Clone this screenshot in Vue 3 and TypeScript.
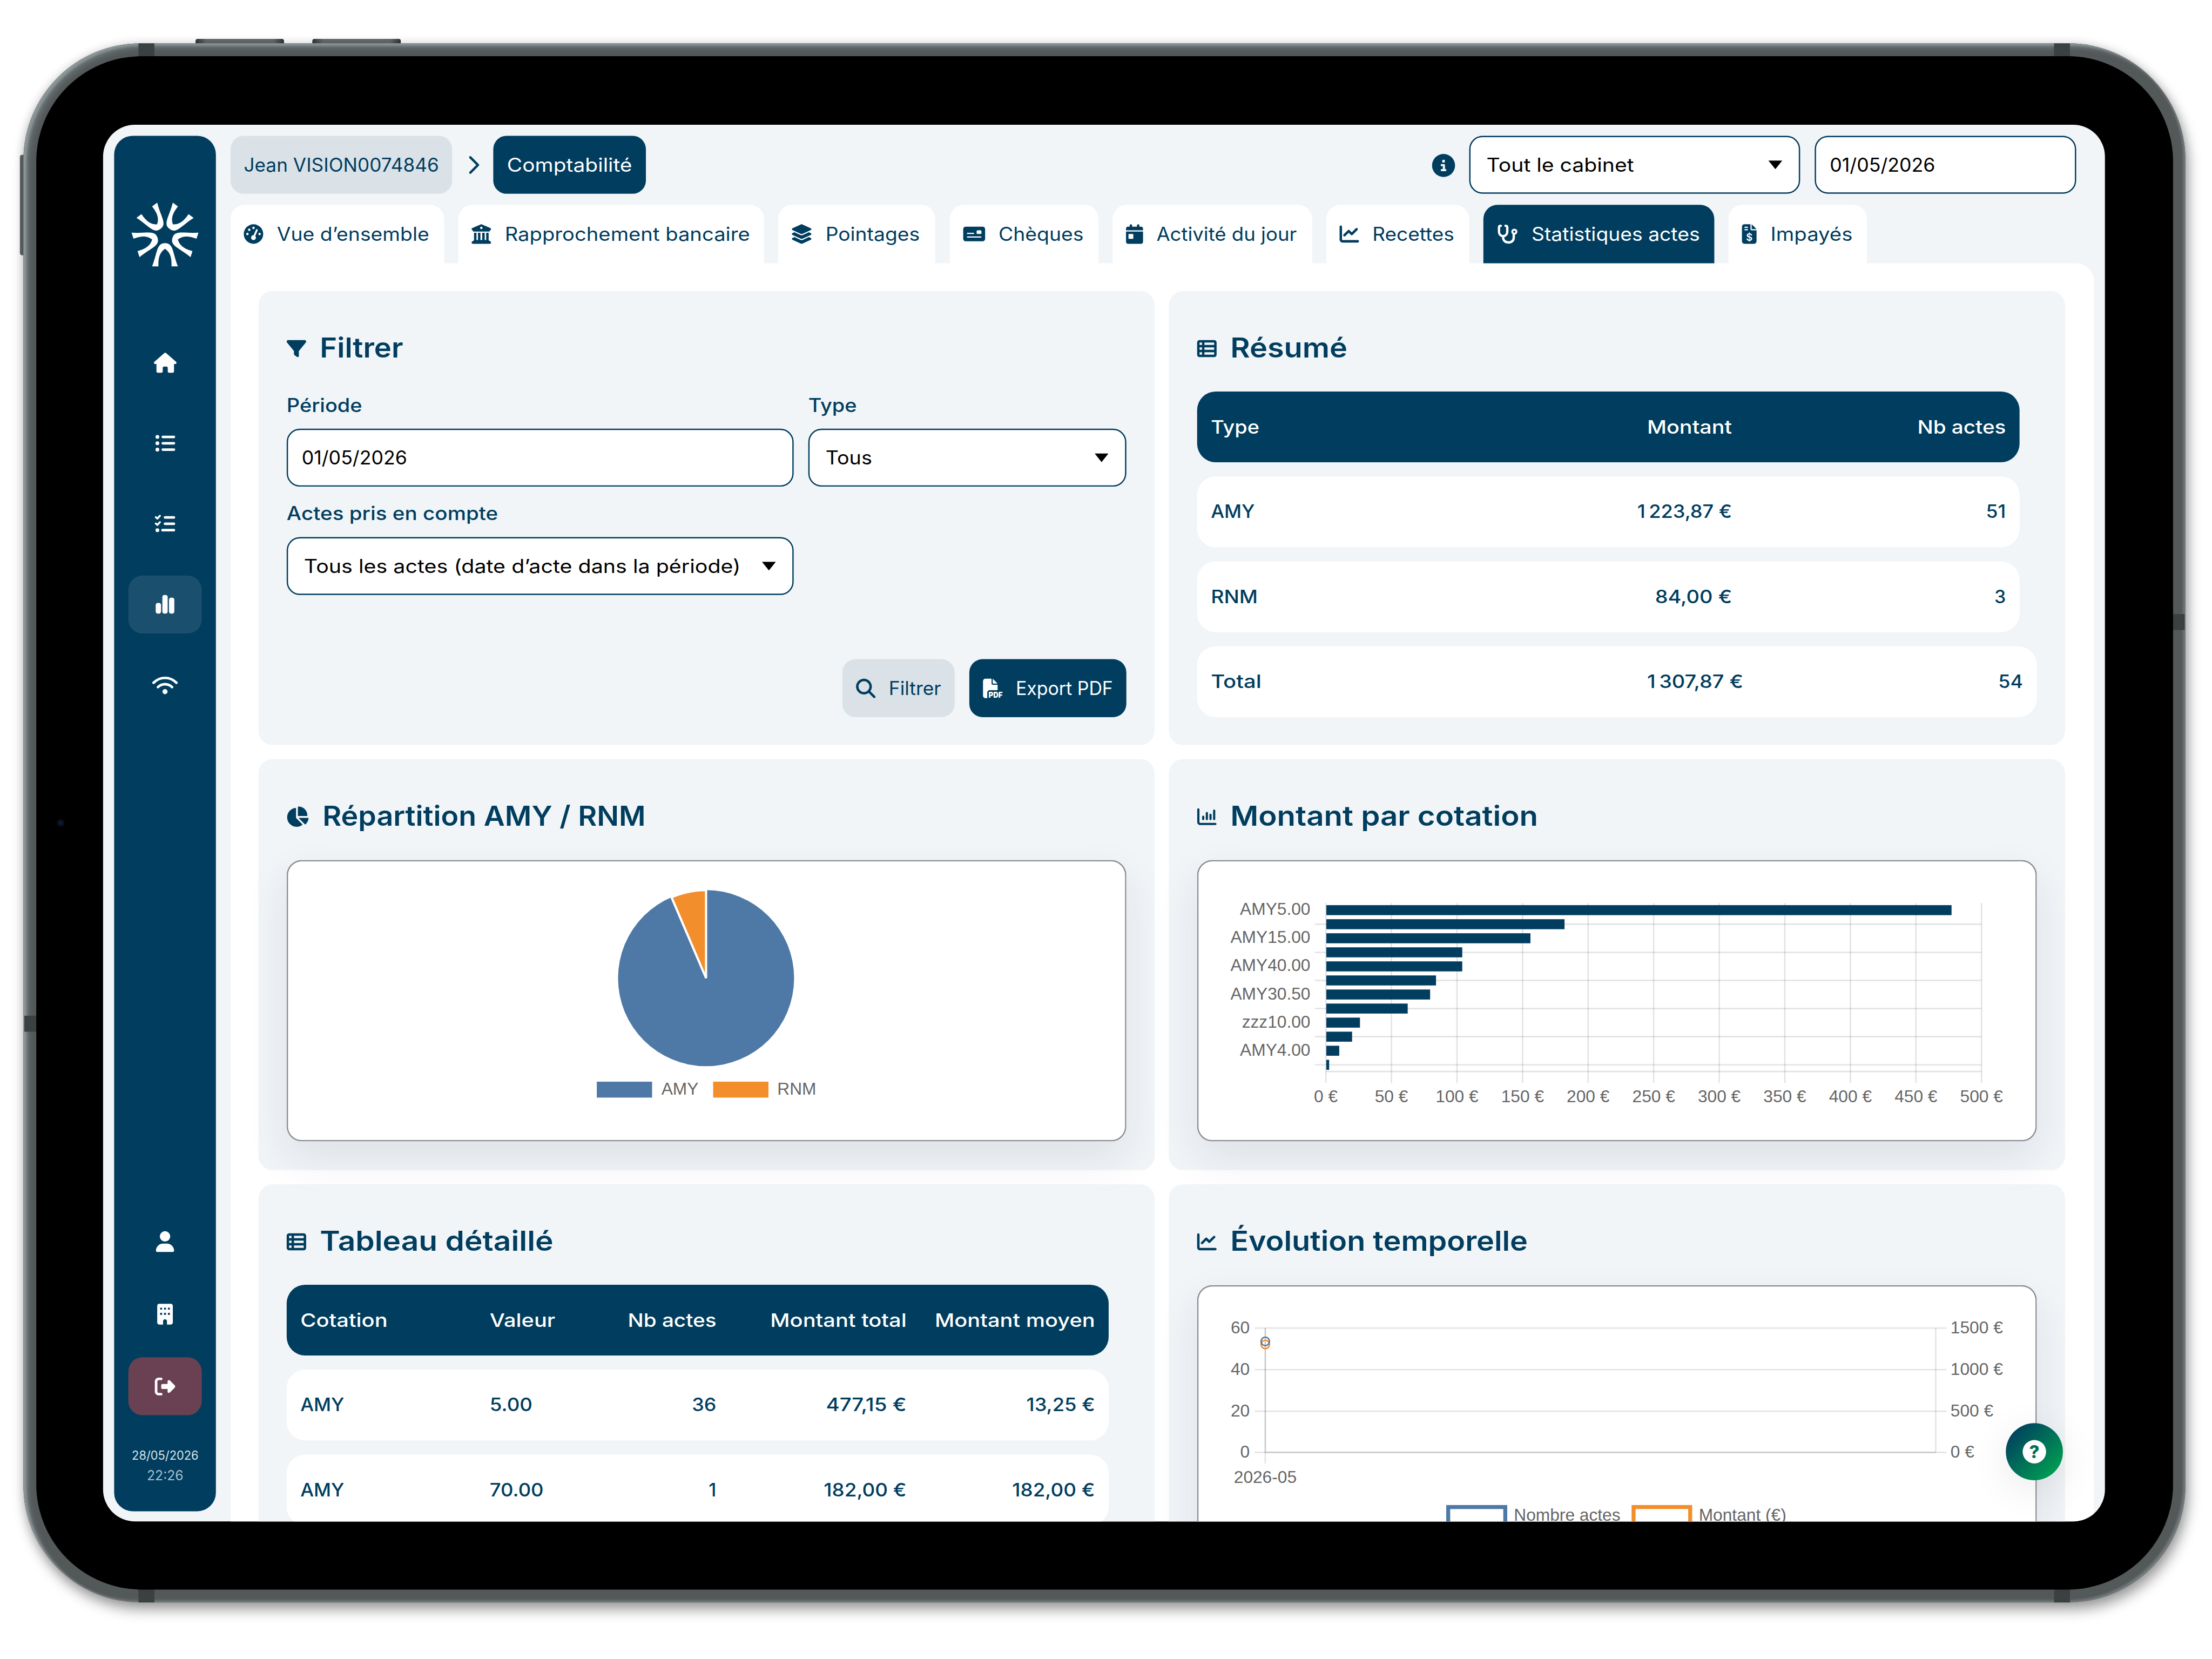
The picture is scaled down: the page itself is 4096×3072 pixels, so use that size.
<script setup lang="ts">
interface Icon { box: string; body: string }

const p = (d: string) => `<path fill="currentColor" fill-rule="evenodd" d="${d}"/>`
const s = (d: string, w: number) =>
  `<path fill="none" stroke="currentColor" stroke-width="${w}" stroke-linecap="round" stroke-linejoin="round" d="${d}"/>`

const icons: Record<string, Icon> = {
  home: { box: '0 0 576 512', body: p('M575.8 255.5c0 18-15 32.1-32 32.1h-32l.7 160.2c0 2.7-.2 5.4-.5 8.1V472c0 22.1-17.9 40-40 40H456H392c-22.1 0-40-17.9-40-40V384c0-17.7-14.3-32-32-32H256c-17.7 0-32 14.3-32 32v88c0 22.1-17.9 40-40 40H104c-22.1 0-40-17.9-40-40V287.6H32c-18 0-32-14-32-32.1c0-9 3-17 10-24L266.4 8c7-7 15-8 22-8s15 2 21 7L564.8 231.5c8 7 12 15 11 24z') },
  list: { box: '0 0 512 512', body: s('M200 96H480M200 256H480M200 416H480', 64) + '<g fill="currentColor"><circle cx="64" cy="96" r="48"/><circle cx="64" cy="256" r="48"/><circle cx="64" cy="416" r="48"/></g>' },
  check: { box: '0 0 512 512', body: s('M256 96H480M256 256H480M192 416H480', 64) + s('M24 88L64 124L128 54M24 248L64 284L128 214', 48) + '<circle cx="64" cy="416" r="48" fill="currentColor"/>' },
  bars: { box: '0 0 448 512', body: p('M160 80c0-26.5 21.5-48 48-48h32c26.5 0 48 21.5 48 48V432c0 26.5-21.5 48-48 48H208c-26.5 0-48-21.5-48-48V80zM0 272c0-26.5 21.5-48 48-48H80c26.5 0 48 21.5 48 48V432c0 26.5-21.5 48-48 48H48c-26.5 0-48-21.5-48-48V272zM368 96h32c26.5 0 48 21.5 48 48V432c0 26.5-21.5 48-48 48H368c-26.5 0-48-21.5-48-48V144c0-26.5 21.5-48 48-48z') },
  wifi: { box: '0 0 640 512', body: s('M32 192C195 29 445 29 608 192M142 302C245 202 395 202 498 302', 64) + '<circle cx="320" cy="416" r="64" fill="currentColor"/>' },
  user: { box: '0 0 448 512', body: p('M224 256A128 128 0 1 0 224 0a128 128 0 1 0 0 256zm-45.7 48C79.8 304 0 383.8 0 482.3C0 498.7 13.3 512 29.7 512H418.3c16.4 0 29.7-13.3 29.7-29.7C448 383.8 368.2 304 269.7 304H178.3z') },
  building: { box: '0 0 384 512', body: p('M48 0C21.500 0 0 21.500 0 48V464c0 26.500 21.500 48 48 48H144V432a48 48 0 0 1 96 0V512H336c26.500 0 48-21.500 48-48V48c0-26.500-21.500-48-48-48ZM72 96h48v48h-48ZM168 96h48v48h-48ZM264 96h48v48h-48ZM72 224h48v48h-48ZM168 224h48v48h-48ZM264 224h48v48h-48Z') },
  logout: { box: '0 0 512 512', body: p('M377.9 105.9L500.7 228.7c7.2 7.2 11.3 17.1 11.3 27.3s-4.1 20.1-11.3 27.3L377.9 406.1c-6.4 6.4-15 9.9-24 9.9c-18.700 0-33.900-15.200-33.900-33.900l0-62.100-128 0c-17.700 0-32-14.300-32-32l0-64c0-17.700 14.300-32 32-32l128 0 0-62.100c0-18.700 15.200-33.900 33.900-33.900c9 0 17.600 3.600 24 9.900zM160 96L96 96c-17.700 0-32 14.300-32 32l0 256c0 17.700 14.300 32 32 32l64 0c17.700 0 32 14.300 32 32s-14.300 32-32 32l-64 0c-53 0-96-43-96-96L0 128C0 75 43 32 96 32l64 0c17.700 0 32 14.300 32 32s-14.300 32-32 32z') },
  chevron: { box: '0 0 320 512', body: s('M50 64L242 256L50 448', 60) },
  info: { box: '0 0 512 512', body: p('M256 512A256 256 0 1 0 256 0a256 256 0 1 0 0 512zM216 336h24V272H216c-13.3 0-24-10.7-24-24s10.7-24 24-24h48c13.3 0 24 10.7 24 24v88h8c13.3 0 24 10.7 24 24s-10.7 24-24 24H216c-13.3 0-24-10.7-24-24s10.7-24 24-24zm40-208a32 32 0 1 1 0 64 32 32 0 1 1 0-64z') },
  gauge: { box: '0 0 512 512', body: p('M0 256a256 256 0 1 1 512 0A256 256 0 1 1 0 256zM288 96a32 32 0 1 0 -64 0 32 32 0 1 0 64 0zM256 416c35.300 0 64-28.700 64-64c0-17.400-6.900-33.100-18.100-44.600L366 161.700c5.300-12.100-.2-26.300-12.300-31.600s-26.300 .2-31.600 12.300L257.900 288c-.6 0-1.300 0-1.900 0c-35.300 0-64 28.700-64 64s28.700 64 64 64zM176 144a32 32 0 1 0 -64 0 32 32 0 1 0 64 0zM96 288a32 32 0 1 0 0-64 32 32 0 1 0 0 64zm352-32a32 32 0 1 0 -64 0 32 32 0 1 0 64 0z') },
  bank: { box: '0 0 512 512', body: p('M243.4 2.6l-224 96c-14 6-21.8 21-18.7 35.8S16.8 160 32 160v8c0 13.3 10.7 24 24 24H456c13.3 0 24-10.7 24-24v-8c15.2 0 28.3-10.7 31.3-25.6s-4.8-29.900-18.700-35.800l-224-96c-8-3.400-17.200-3.400-25.200 0zM128 224H64V420.3c-.6 .3-1.200 .7-1.800 1.100l-48 32c-11.700 7.800-17 22.400-12.900 35.900S17.900 512 32 512H480c14.100 0 26.500-9.200 30.600-22.700s-1.100-28.100-12.900-35.900l-48-32c-.6-.4-1.200-.7-1.800-1.100V224H384V416H344V224H280V416H232V224H168V416H128V224zM256 64a32 32 0 1 1 0 64 32 32 0 1 1 0-64z') },
  layers: { box: '32 0 512 512', body: p('M264.5 5.2c14.9-6.9 32.100-6.900 47 0l218.600 101c8.500 3.900 13.900 12.400 13.900 21.800s-5.400 17.900-13.900 21.800l-218.600 101c-14.900 6.900-32.100 6.900-47 0L45.900 149.800C37.400 145.800 32 137.300 32 128s5.400-17.900 13.900-21.800L264.500 5.200zM476.900 209.600l53.200 24.600c8.500 3.900 13.900 12.400 13.900 21.800s-5.400 17.900-13.900 21.800l-218.600 101c-14.900 6.900-32.100 6.900-47 0L45.900 277.800C37.400 273.800 32 265.300 32 256s5.400-17.900 13.900-21.800l53.200-24.600 152 70.200c23.400 10.800 50.400 10.800 73.800 0l152-70.200zm-152 198.200l152-70.200 53.200 24.600c8.500 3.900 13.900 12.400 13.900 21.800s-5.400 17.900-13.900 21.800l-218.600 101c-14.900 6.900-32.100 6.900-47 0L45.900 405.800C37.400 401.800 32 393.300 32 384s5.400-17.900 13.900-21.800l53.200-24.600 152 70.200c23.400 10.800 50.400 10.800 73.800 0z') },
  cheque: { box: '0 0 576 512', body: p('M64 64C28.700 64 0 92.700 0 128V384c0 35.300 28.700 64 64 64H512c35.300 0 64-28.700 64-64V128c0-35.300-28.700-64-64-64ZM112 224H272a16 16 0 0 1 0 32H112a16 16 0 0 1 0-32ZM112 320H464a16 16 0 0 1 0 32H112a16 16 0 0 1 0-32ZM376 160H456a24 24 0 0 1 24 24V232a24 24 0 0 1-24 24H376a24 24 0 0 1-24-24V184a24 24 0 0 1 24-24Z') },
  calendar: { box: '0 0 448 512', body: p('M128 0c17.7 0 32 14.3 32 32V64H288V32c0-17.7 14.3-32 32-32s32 14.3 32 32V64h48c26.5 0 48 21.5 48 48v48H0V112C0 85.5 21.5 64 48 64H96V32c0-17.7 14.3-32 32-32zM0 192H448V464c0 26.5-21.5 48-48 48H48c-26.5 0-48-21.5-48-48V192zm80 64c-8.8 0-16 7.2-16 16v96c0 8.8 7.2 16 16 16h96c8.8 0 16-7.2 16-16V272c0-8.8-7.2-16-16-16H80z') },
  line: { box: '0 0 512 512', body: p('M64 64c0-17.7-14.3-32-32-32S0 46.3 0 64V400c0 44.2 35.8 80 80 80H480c17.7 0 32-14.3 32-32s-14.3-32-32-32H80c-8.8 0-16-7.2-16-16V64zm406.6 86.600c12.500-12.500 12.500-32.800 0-45.300s-32.800-12.500-45.300 0L320 210.700l-57.400-57.400c-12.500-12.500-32.800-12.500-45.300 0l-112 112c-12.500 12.500-12.500 32.800 0 45.300s32.800 12.500 45.300 0L240 221.300l57.400 57.400c12.500 12.500 32.800 12.500 45.300 0l128-128z') },
  steth: { box: '0 0 576 512', body: s('M112 32C72 32 64 44 64 70V200a112 112 0 0 0 224 0V70C288 44 280 32 240 32M176 312V352a128 128 0 0 0 128 128a128 128 0 0 0 160-128V250', 64) + '<circle cx="480" cy="192" r="56" fill="none" stroke="currentColor" stroke-width="52"/>' },
  invoice: { box: '0 0 384 512', body: p('M64 0C28.700 0 0 28.700 0 64V448c0 35.300 28.700 64 64 64H320c35.300 0 64-28.700 64-64V160H256c-17.700 0-32-14.300-32-32V0ZM256 0V128H384ZM64 80a16 16 0 0 1 16-16H144a16 16 0 0 1 0 32H80A16 16 0 0 1 64 80ZM64 144a16 16 0 0 1 16-16H144a16 16 0 0 1 0 32H80a16 16 0 0 1-16-16Z') + '<text x="192" y="434" text-anchor="middle" font-family="Inter, sans-serif" font-size="260" font-weight="600" fill="#fff">$</text>' },
  filter: { box: '0 0 512 512', body: p('M3.9 54.9C10.5 40.9 24.5 32 40 32H472c15.5 0 29.5 8.9 36.1 22.900s4.600 30.500-5.200 42.500L320 320.900V448c0 12.100-6.800 23.200-17.700 28.600s-23.800 4.300-33.500-3l-64-48c-8.100-6-12.800-15.500-12.800-25.600V320.900L9 97.300C-.7 85.400-2.800 68.800 3.900 54.900z') },
  table: { box: '0 0 512 512', body: p('M0 96C0 60.7 28.7 32 64 32H448c35.3 0 64 28.7 64 64V416c0 35.3-28.7 64-64 64H64c-35.3 0-64-28.7-64-64V96zm64 0v64h64V96H64zm384 0H192v64H448V96zM64 224v64h64V224H64zm384 0H192v64H448V224zM64 352v64h64V352H64zm384 0H192v64H448V352z') },
  pie: { box: '20 0 560 512', body: p('M304 240V16.6c0-9 7-16.6 16-16.6C443.7 0 544 100.3 544 224c0 9-7.6 16-16.6 16H304zM32 272C32 150.7 122.1 50.3 239 34.3c9.2-1.3 17 6.1 17 15.4V288L412.5 444.5c6.7 6.7 6.2 17.7-1.5 23.1C371.8 495.6 323.8 512 272 512C139.5 512 32 404.6 32 272zm526.4 16c9.3 0 16.6 7.8 15.4 17c-7.7 55.9-34.6 105.600-73.900 142.300c-6 5.600-15.400 5.200-21.200-.7L320 288H558.400z') },
  column: { box: '0 0 512 512', body: s('M32 64V400a48 48 0 0 0 48 48H480M160 256V320M256 160V320M352 208V320M448 96V320', 58) },
  search: { box: '0 0 512 512', body: p('M416 208c0 45.9-14.9 88.3-40 122.7L502.6 457.400c12.500 12.500 12.500 32.800 0 45.300s-32.800 12.500-45.300 0L330.700 376c-34.400 25.200-76.800 40-122.700 40C93.100 416 0 322.900 0 208S93.100 0 208 0S416 93.100 416 208zM208 352a144 144 0 1 0 0-288 144 144 0 1 0 0 288z') },
  pdf: { box: '0 0 512 512', body: p('M0 64C0 28.700 28.700 0 64 0H224V128c0 17.700 14.300 32 32 32H384V304H176c-35.300 0-64 28.700-64 64V512H64c-35.300 0-64-28.700-64-64ZM384 128H256V0Z') + '<text x="146" y="506" textLength="366" lengthAdjust="spacingAndGlyphs" font-family="Inter, sans-serif" font-size="210" font-weight="900" fill="currentColor">PDF</text>' },
}

// Widens or narrows a label so that it takes exactly the given width.
const vFit = {
  mounted(el: HTMLElement, binding: { value: number }) {
    if (!binding.value) return
    const natural = el.offsetWidth
    el.style.width = `${binding.value}px`
    el.style.transformOrigin = '0 50%'
    el.style.transform = `scaleX(${binding.value / natural})`
  },
}

const menu = [
  { icon: 'home', w: 51, h: 46 },
  { icon: 'list', w: 46, h: 46 },
  { icon: 'check', w: 46, h: 46 },
  { icon: 'bars', w: 42, h: 48, active: true },
  { icon: 'wifi', w: 58, h: 46 },
]
const footer = [
  { icon: 'user', w: 42, h: 47 },
  { icon: 'building', w: 36, h: 47 },
  { icon: 'logout', w: 46, h: 46, danger: true },
]
const tabs = [
  { icon: 'gauge', label: 'Vue d’ensemble', box: 483, w: 344, iw: 44 },
  { icon: 'bank', label: 'Rapprochement bancaire', box: 691, w: 554, iw: 44 },
  { icon: 'layers', label: 'Pointages', box: 355, w: 213, iw: 46 },
  { icon: 'cheque', label: 'Chèques', box: 336, w: 192, iw: 50 },
  { icon: 'calendar', label: 'Activité du jour', box: 451, w: 317, iw: 39 },
  { icon: 'line', label: 'Recettes', box: 323, w: 185, iw: 44 },
  { icon: 'steth', label: 'Statistiques actes', box: 522, w: 380, iw: 48, active: true },
  { icon: 'invoice', label: 'Impayés', box: 313, w: 186, iw: 34 },
]

type Cell = [string, number]
const summaryHead: Cell[] = [['Type', 110], ['Montant', 192], ['Nb actes', 200]]
const summary: Cell[][] = [
  [['AMY', 99], ['1\u202f223,87 €', 214], ['51', 45]],
  [['RNM', 106], ['84,00 €', 174], ['3', 0]],
  [['Total', 114], ['1\u202f307,87 €', 217], ['54', 56]],
]
const detailHead: Cell[] = [['Cotation', 197], ['Valeur', 148], ['Nb actes', 200], ['Montant total', 308], ['Montant moyen', 362]]
const details: Cell[][] = [
  [['AMY', 99], ['5.00', 97], ['36', 55], ['477,15 €', 182], ['13,25 €', 155]],
  [['AMY', 99], ['70.00', 122], ['1', 0], ['182,00 €', 187], ['182,00 €', 187]],
]

const amounts = [477.15, 182, 156, 104, 104, 84, 79.5, 62.4, 26, 20, 10.2, 2.5]
const barLabels = ['AMY5.00', 'AMY15.00', 'AMY40.00', 'AMY30.50', 'zzz10.00', 'AMY4.00']
const barX = (v: number) => 291 + (v / 500) * 1482
const barY = (i: number) => 113.3 + i * 31.78
const ticks = Array.from({ length: 11 }, (_, i) => i * 50)
const share = (84 / 1307.87) * Math.PI * 2
const pieX = 948 - 199 * Math.sin(share)
const pieY = 267 - 199 * Math.cos(share)
const levels = [
  { y: 97, left: '60', right: '1500 €' },
  { y: 191, left: '40', right: '1000 €' },
  { y: 285, left: '20', right: '500 €' },
  { y: 378, left: '0', right: '0 €' },
]
</script>

<template>
  <div class="viewport">
    <div class="stage">
      <i class="key k1"></i><i class="key k2"></i><i class="key k3"></i>
      <div class="tablet">
        <i class="band b1"></i><i class="band b2"></i><i class="band b3"></i>
        <i class="band b4"></i><i class="band b5"></i><i class="band b6"></i>
        <div class="bezel">
          <i class="camera"></i>
          <div class="screen">
            <aside class="sidebar">
              <svg class="logo" viewBox="-75 -75 150 150">
                <path
                  v-for="n in 5" :key="n" :transform="`rotate(${n * 72})`" fill="#fff"
                  d="M-29.500 71C-17 40-20 18 0 18C20 18 17 40 29.500 71H15C16 48 10 38 0 31C-10 38-16 48-15 71Z"
                />
              </svg>
              <nav class="menu">
                <a v-for="m in menu" :key="m.icon" class="entry" :class="{ active: m.active }">
                  <svg :width="m.w" :height="m.h" :viewBox="icons[m.icon].box" v-html="icons[m.icon].body"></svg>
                </a>
              </nav>
              <nav class="foot">
                <a v-for="m in footer" :key="m.icon" class="entry" :class="{ danger: m.danger }">
                  <svg :width="m.w" :height="m.h" :viewBox="icons[m.icon].box" v-html="icons[m.icon].body"></svg>
                </a>
              </nav>
              <div class="date"><span v-fit="151">28/05/2026</span></div>
              <div class="time"><span v-fit="83">22:26</span></div>
            </aside>

            <main class="main">
              <header class="topbar">
                <div class="chip soft jean"><span v-fit="441">Jean VISION0074846</span></div>
                <svg class="chev" :viewBox="icons.chevron.box" v-html="icons.chevron.body"></svg>
                <div class="chip solid compta"><span v-fit="283">Comptabilité</span></div>
                <svg class="info" :viewBox="icons.info.box" v-html="icons.info.body"></svg>
                <div class="field select cabinet"><span v-fit="333">Tout le cabinet</span><i class="caret"></i></div>
                <div class="field day"><span v-fit="238">01/05/2026</span></div>
              </header>

              <nav class="tabs">
                <a v-for="t in tabs" :key="t.label" class="tab" :class="{ on: t.active }" :style="{ width: t.box + 'px' }">
                  <svg :width="t.iw" height="44" :viewBox="icons[t.icon].box" v-html="icons[t.icon].body"></svg>
                  <span v-fit="t.w">{{ t.label }}</span>
                </a>
              </nav>

              <div class="panel">
                <section class="card r1">
                  <h2><svg :viewBox="icons.filter.box" v-html="icons.filter.body"></svg><span v-fit="188">Filtrer</span></h2>
                  <div class="form">
                    <label class="wide"><span v-fit="171">Période</span><div class="field"><span v-fit="238">01/05/2026</span></div></label>
                    <label class="slim"><span v-fit="110">Type</span><div class="field select"><span v-fit="105">Tous</span><i class="caret"></i></div></label>
                    <label class="wide"><span v-fit="478">Actes pris en compte</span><div class="field select"><span v-fit="987">Tous les actes (date d’acte dans la période)</span><i class="caret"></i></div></label>
                  </div>
                  <div class="actions">
                    <div class="chip soft find"><svg width="44" height="44" :viewBox="icons.search.box" v-html="icons.search.body"></svg><span v-fit="118">Filtrer</span></div>
                    <div class="chip solid export"><svg width="44" height="44" :viewBox="icons.pdf.box" v-html="icons.pdf.body"></svg><span v-fit="220">Export PDF</span></div>
                  </div>
                </section>

                <section class="card r1">
                  <h2><svg :viewBox="icons.table.box" v-html="icons.table.body"></svg><span v-fit="265">Résumé</span></h2>
                  <div class="rows summary">
                    <div class="row head"><div v-for="c in summaryHead" :key="c[0]" class="cell"><span v-fit="c[1]">{{ c[0] }}</span></div></div>
                    <div v-for="(r, i) in summary" :key="i" class="row" :class="{ total: i === 2 }">
                      <div v-for="(c, j) in r" :key="j" class="cell"><span v-fit="c[1]">{{ c[0] }}</span></div>
                    </div>
                  </div>
                </section>

                <section class="card r2">
                  <h2><svg class="big" :viewBox="icons.pie.box" v-html="icons.pie.body"></svg><span v-fit="730">Répartition AMY / RNM</span></h2>
                  <div class="chart">
                    <svg width="1897" height="636" viewBox="0 0 1897 636">
                      <circle cx="948" cy="267" r="199" fill="#4e79a7" />
                      <path :d="`M948 267L${pieX} ${pieY}A199 199 0 0 1 948 68Z`" fill="#f28e2b" stroke="#fff" stroke-width="5" stroke-linejoin="bevel" />
                      <rect x="701" y="501" width="125" height="36" fill="#4e79a7" />
                      <text x="847" y="530">AMY</text>
                      <rect x="964" y="501" width="125" height="36" fill="#f28e2b" />
                      <text x="1109" y="530">RNM</text>
                    </svg>
                  </div>
                </section>

                <section class="card r2">
                  <h2><svg :viewBox="icons.column.box" v-html="icons.column.body"></svg><span v-fit="696">Montant par cotation</span></h2>
                  <div class="chart">
                    <svg width="1897" height="636" viewBox="0 0 1897 636">
                      <g stroke="#000" stroke-opacity=".11" stroke-width="3.2">
                        <path v-for="t in ticks" :key="t" :d="`M${barX(t)} 97V504`" />
                        <path v-for="n in 6" :key="n" :d="`M266 ${barY(n * 2 - 1)}H1773`" />
                        <path d="M291 478H1773" />
                      </g>
                      <rect v-for="(v, i) in amounts" :key="i" x="292" :y="barY(i) - 11.3" :width="barX(v) - 292" height="22.6" fill="#003d5e" />
                      <text v-for="(l, i) in barLabels" :key="l" x="256" :y="barY(i * 2) + 11" text-anchor="end">{{ l }}</text>
                      <text v-for="t in ticks" :key="'t' + t" :x="barX(t)" y="548" text-anchor="middle">{{ t }} €</text>
                    </svg>
                  </div>
                </section>

                <section class="card r3">
                  <h2><svg :viewBox="icons.table.box" v-html="icons.table.body"></svg><span v-fit="528">Tableau détaillé</span></h2>
                  <div class="rows detail">
                    <div class="row head"><div v-for="c in detailHead" :key="c[0]" class="cell"><span v-fit="c[1]">{{ c[0] }}</span></div></div>
                    <div v-for="(r, i) in details" :key="i" class="row">
                      <div v-for="(c, j) in r" :key="j" class="cell"><span v-fit="c[1]">{{ c[0] }}</span></div>
                    </div>
                  </div>
                </section>

                <section class="card r3">
                  <h2><svg :viewBox="icons.line.box" v-html="icons.line.body"></svg><span v-fit="672">Évolution temporelle</span></h2>
                  <div class="chart">
                    <svg width="1897" height="636" viewBox="0 0 1897 636">
                      <g stroke="#000" stroke-opacity=".11" stroke-width="3.2">
                        <path v-for="l in levels" :key="l.y" :d="`M130 ${l.y}H1694`" />
                        <path d="M154 97V403M1669.500 97V378" />
                        <path d="M154 97V378M154 378H1669" />
                      </g>
                      <g fill="none" stroke-width="3.200">
                        <circle cx="154" cy="134" r="9.500" stroke="#f28e2b" />
                        <circle cx="154" cy="127" r="9.500" stroke="#4e79a7" />
                      </g>
                      <template v-for="l in levels" :key="'l' + l.y">
                        <text x="119" :y="l.y + 12" text-anchor="end">{{ l.left }}</text>
                        <text x="1703" :y="l.y + 12">{{ l.right }}</text>
                      </template>
                      <text x="154" y="447" text-anchor="middle">2026-05</text>
                      <g fill="none" stroke-width="9">
                        <rect x="567.500" y="501.500" width="129" height="60" stroke="#4e79a7" />
                        <rect x="986.500" y="501.500" width="128" height="60" stroke="#f28e2b" />
                      </g>
                      <text x="716" y="532">Nombre actes</text>
                      <text x="1134" y="532">Montant (€)</text>
                    </svg>
                  </div>
                </section>
              </div>
            </main>
            <div class="help"><span>?</span></div>
          </div>
        </div>
      </div>
    </div>
  </div>
</template>

<style>
html, body { margin: 0; background: #fff; overflow: hidden; }
</style>

<style scoped>
* { box-sizing: border-box; }
.viewport { width: 4096px; height: 3072px; overflow: hidden; background: #fff; }
.stage {
  position: relative; width: 5000px; height: 3750px; padding: 98px 0 0 53px;
  transform: scale(.8192); transform-origin: 0 0;
  font-family: Inter, "Open Sans", sans-serif; font-size: 42.500px; line-height: 1.2; color: #003d5e;
}
.stage span { display: inline-block; flex: none; white-space: nowrap; }
svg { flex: none; display: block; overflow: visible; }

/* Tablet shell */
.tablet {
  position: relative; width: 4887px; height: 3524px; padding: 29px 28px 29px 29px; border-radius: 264px;
  background: #535859;
  box-shadow: inset 7px 5px 5px #8d9799, inset -5px -4px 5px #777d7f, inset 14px 12px 10px #666d6f,
    6px 16px 30px rgba(0, 0, 0, .36), 0 0 22px rgba(0, 0, 0, .12);
}
.bezel { position: relative; width: 4830px; height: 3466px; padding: 155px 0 0 151px; border-radius: 238px; background: #000; }
.band { position: absolute; background: #3b4041; }
.b1 { left: 260px; top: 0; width: 36px; height: 30px; }
.b2 { left: 4590px; top: 0; width: 36px; height: 30px; }
.b3 { left: 260px; bottom: 0; width: 36px; height: 30px; }
.b4 { left: 4590px; bottom: 0; width: 36px; height: 30px; }
.b5 { left: 2px; top: 2198px; width: 28px; height: 36px; }
.b6 { right: 2px; top: 1290px; width: 28px; height: 36px; }
.key { position: absolute; background: linear-gradient(90deg, #2f3435, #666c6e 12%, #666c6e 88%, #2f3435); border-radius: 5px; }
.k1 { left: 442px; top: 88px; width: 200px; height: 20px; }
.k2 { left: 706px; top: 88px; width: 200px; height: 20px; }
.k3 { left: 45px; top: 350px; width: 20px; height: 227px; background: #626869; }
.camera { position: absolute; left: 46px; top: 1724px; width: 18px; height: 18px; border-radius: 50%; background: radial-gradient(#0f1836 20%, #05070e 70%); }
.screen {
  position: relative; display: flex; width: 4525px; height: 3157px; padding: 25px 25px 0; gap: 33px;
  border-radius: 72px; background: #f1f5f8; overflow: hidden;
}

/* Sidebar */
.sidebar {
  flex: none; width: 230px; height: 3109px; border-radius: 42px; background: #003d5e; color: #fff;
  display: flex; flex-direction: column; align-items: center;
}
.logo { width: 148px; height: 148px; margin-top: 151px; }
.menu { display: flex; flex-direction: column; gap: 51.3px; margin-top: 148px; }
.foot { display: flex; flex-direction: column; gap: 32.500px; margin-top: auto; }
.entry { width: 166px; height: 131px; border-radius: 32px; display: flex; align-items: center; justify-content: center; }
.entry.active { background: #1b4f6e; }
.entry.danger { background: #6a4152; }
.date { font-size: 27.500px; line-height: 40px; margin-top: 70px; color: #dce5ea; }
.time { font-size: 32px; line-height: 40px; margin: 6px 0 61px; color: #a9bcc8; }

/* Top bar */
.main { flex: none; width: 4212px; }
.topbar { display: flex; align-items: center; height: 131px; }
.chip { display: flex; align-items: center; justify-content: center; height: 131px; border-radius: 30px; }
.soft { background: #dae2e8; }
.solid { background: #003d5e; color: #fff; }
.jean { width: 501px; }
.chev { width: 30px; height: 46px; margin: 0 27px 0 36px; }
.compta { width: 345px; }
.info { width: 52px; height: 52px; margin: 3px 32px 0 auto; }
.field {
  display: flex; align-items: center; height: 131px; padding: 0 31px; border: 3.600px solid #003d5e; border-radius: 30px;
  background: #fff; color: #000;
}
.select { padding: 0 37px 0 36px; justify-content: space-between; }
.caret { width: 32px; height: 20px; background: #000; clip-path: polygon(0 0, 100% 0, 50% 100%); }
.cabinet { width: 748px; margin-right: 33px; }
.day { width: 591px; margin-right: 40px; }

.tabs { display: flex; gap: 32.200px; margin-top: 25px; }
.tab {
  flex: none; display: flex; align-items: center; gap: 30.500px; height: 132px; padding-left: 30px;
  border-radius: 32px 32px 0 0; background: #fff;
}
.tab.on { background: #003d5e; color: #fff; }

/* Content */
.panel {
  display: grid; grid-template-columns: 2026px 2026px; grid-template-rows: 1026px 929px 960px; gap: 32px;
  width: 4212px; height: 2900px; padding: 63px 63px; border-radius: 0 40px 0 0; background: #fff;
}
.card { padding: 92px 64px 0; border-radius: 32px; background: #f1f5f8; }
h2 { display: flex; align-items: center; gap: 31px; height: 72px; margin: 0; font-size: 62px; line-height: 72px; font-weight: 600; }
h2 svg { width: 44px; height: 44px; margin-top: 4px; }
h2 svg.big { width: 50px; height: 46px; }

.form { display: flex; flex-wrap: wrap; gap: 30px 33px; margin-top: 68px; }
label { display: block; }
label > span { height: 52px; line-height: 52px; margin-bottom: 27px; font-weight: 500; vertical-align: top; }
.form .field { height: 131px; }
.wide { width: 1146px; height: 215px; }
.slim { width: 719px; height: 215px; }
.actions { display: flex; justify-content: flex-end; gap: 33px; margin-top: 140px; }
.actions .chip { gap: 30px; }
.find { width: 254px; }
.export { width: 355px; }

.rows { display: flex; flex-direction: column; gap: 32px; margin-top: 63px; }
.row { display: grid; align-items: center; height: 160px; padding: 0 31px; border-radius: 42px; background: #fff; font-weight: 500; font-size: 41.500px; }
.head { background: #003d5e; color: #fff; font-size: 42px; }
.cell { display: flex; justify-content: flex-end; }
.cell:first-child { justify-content: flex-start; }
.summary .row { width: 1859px; grid-template-columns: 558px 620px 619px; }
.summary .row.total { width: 1898px; grid-template-columns: 570px 633px 633px; }
.detail .row { width: 1858px; grid-template-columns: 428px 301px 211px 430px 426px; }
.detail .cell:nth-child(2) { justify-content: flex-start; }

.chart {
  position: relative; width: 1898px; height: 636px; margin-top: 64px; border-radius: 34px; background: #fff;
  box-shadow: inset 0 0 0 3px #8a8d8f, 0 38px 96px rgba(30, 30, 70, .09);
}
.chart text { font-family: "Liberation Sans", Arial, sans-serif; font-size: 38.700px; fill: #666; }

.help {
  position: absolute; left: 4301px; top: 2935px; width: 129px; height: 129px; border-radius: 50%;
  display: flex; align-items: center; justify-content: center;
  background: linear-gradient(135deg, #003d5e 8%, #00a651 95%); box-shadow: 0 20px 90px rgba(0, 0, 0, .09);
}
.help span { width: 53px; height: 53px; line-height: 53px; border-radius: 50%; background: #fff; color: #007054; text-align: center; font-size: 40px; font-weight: 800; }
</style>
